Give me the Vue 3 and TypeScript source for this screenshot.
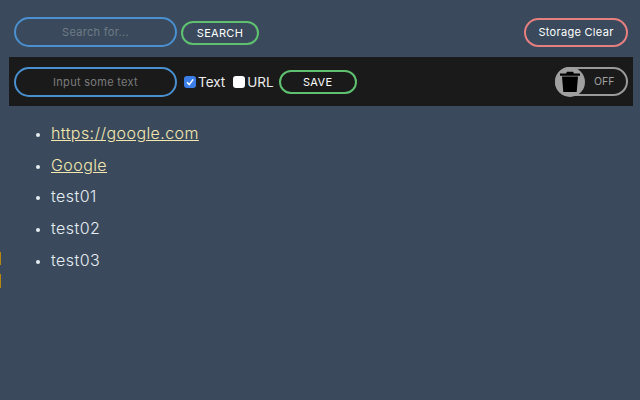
<script setup lang="ts">
const items: { text: string; href?: string }[] = [
  { text: 'https://google.com', href: '#' },
  { text: 'Google', href: '#' },
  { text: 'test01' },
  { text: 'test02' },
  { text: 'test03' },
]
</script>

<template>
  <div class="page">
    <header class="top">
      <input class="field" placeholder="Search for..." />
      <button class="btn green search">SEARCH</button>
      <button class="btn red clear">Storage Clear</button>
    </header>
    <section class="bar">
      <input class="field" placeholder="Input some text" />
      <label class="check"><span class="box on"><svg viewBox="0 0 12 12" width="12" height="12"><path d="M3 6.2 5.2 8.600 9.200 3.400" fill="none" stroke="#fff" stroke-width="1.5"/></svg></span>Text</label>
      <label class="check"><span class="box"></span>URL</label>
      <button class="btn green save">SAVE</button>
      <div class="toggle">
        <span class="knob">
          <svg viewBox="0 0 30 30" width="30" height="30">
            <path d="M5 6.500h20v2.300H5zM11 6.500l1-1.800h6l1 1.800z" fill="#000"/>
            <path d="M7 9.500h16l-1.300 15.500H8.300z" fill="#000"/>
          </svg>
        </span>
        <span class="off">OFF</span>
      </div>
    </section>
    <ul class="list">
      <li v-for="item in items" :key="item.text">
        <a v-if="item.href" :href="item.href">{{ item.text }}</a>
        <template v-else>{{ item.text }}</template>
      </li>
    </ul>
  </div>
</template>

<style scoped>
.page {
  width: 640px;
  height: 400px;
  box-sizing: border-box;
  background:
    linear-gradient(#b8860b, #b8860b) 0 252px / 1px 13px no-repeat,
    linear-gradient(#b8860b, #b8860b) 0 274px / 1px 14px no-repeat,
    #3a4a5c;
  font-family: Inter, "Noto Sans", "Liberation Sans", sans-serif;
  color: #e6ecf2;
  overflow: hidden;
}
.top {
  display: flex;
  align-items: center;
  gap: 4px;
  padding: 7px 12px 0 14px;
  height: 57px;
  box-sizing: border-box;
}
.field {
  width: 163px;
  height: 30px;
  box-sizing: border-box;
  border: 2px solid #4a90d0;
  border-radius: 15px;
  background: transparent;
  text-align: center;
  font-family: inherit;
  font-size: 11px;
  letter-spacing: 0.3px;
  color: #fff;
  outline: none;
  padding: 0 8px;
}
.top .field::placeholder { color: #6f7a86; opacity: 1; }
.bar .field::placeholder { color: #7c7c7c; opacity: 1; }
.btn {
  background: transparent;
  border-radius: 15px;
  color: #fff;
  font-family: inherit;
  font-size: 11px;
  font-weight: 400;
  letter-spacing: 0.3px;
  padding: 0;
  box-sizing: border-box;
}
.green { border: 2px solid #5fc06f; }
.red { border: 2px solid #e77f7f; }
.search { width: 78px; height: 24px; margin-top: 2px; }
.clear { width: 104px; height: 29px; margin-left: auto; }
.bar {
  display: flex;
  align-items: center;
  margin-left: 9px;
  width: 624px;
  height: 49px;
  box-sizing: border-box;
  padding: 0 5px;
  background: #1a1a1a;
}
.check {
  display: flex;
  align-items: center;
  gap: 2px;
  font-size: 13.500px;
  color: #eee;
}
.check:nth-of-type(1) { margin-left: 7px; }
.check:nth-of-type(2) { margin-left: 8px; }
.box {
  width: 12px;
  height: 12px;
  border-radius: 3px;
  background: #fff;
  display: flex;
}
.box.on { background: #3b7ee8; }
.save { width: 78px; height: 24px; margin-left: 5px; }
.toggle {
  position: relative;
  margin-left: auto;
  width: 73px;
  height: 29px;
  box-sizing: border-box;
  border: 2px solid #9a9a9a;
  border-radius: 15px;
  display: flex;
  align-items: center;
}
.knob {
  position: absolute;
  left: -2px;
  top: -2px;
  width: 30px;
  height: 30px;
  border-radius: 50%;
  background: #a0a0a0;
  display: flex;
  align-items: center;
  justify-content: center;
}
.off {
  margin-left: 37px;
  font-size: 10.500px;
  color: #a0a0a0;
}
.list {
  margin: 12px 0 0;
  padding: 0 0 0 51px;
  list-style: disc;
  font-size: 16px;
  font-weight: 300;
  letter-spacing: 0.42px;
  line-height: 31.700px;
}
.list li::marker { font-size: 12px; }
.list a { color: #f3e7b0; text-decoration: underline; }
</style>
